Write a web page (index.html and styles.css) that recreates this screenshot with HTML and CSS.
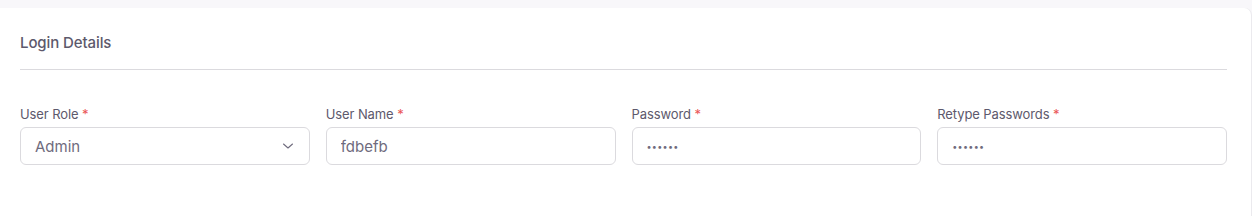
FILE: index.html
```html
<!DOCTYPE html>
<html lang="en">
<head>
    <meta charset="UTF-8">
    <meta name="viewport" content="width=device-width, initial-scale=1.0">
    <title>Login Details</title>
    <link rel="stylesheet" href="styles.css">
</head>
<body>
    <div class="card">
        <h5 class="card-title">Login Details</h5>
        <hr class="divider">

        <div class="form-grid">
            <div class="field">
                <label class="form-label">User Role <span class="req">*</span></label>
                <div class="select-wrap">
                    <select class="form-control">
                        <option>Admin</option>
                        <option>Manager</option>
                        <option>Staff</option>
                    </select>
                    <svg class="caret" width="12" height="12" viewBox="0 0 12 12" fill="none">
                        <path d="M1.5 4l4.5 4 4.5-4" stroke="#6f6b7d" stroke-width="1.1" stroke-linecap="round" stroke-linejoin="round"/>
                    </svg>
                </div>
            </div>
            <div class="field">
                <label class="form-label">User Name <span class="req">*</span></label>
                <input class="form-control" type="text" value="fdbefb">
            </div>
            <div class="field">
                <label class="form-label">Password <span class="req">*</span></label>
                <input class="form-control secret" type="password" value="123456">
            </div>
            <div class="field">
                <label class="form-label">Retype Passwords <span class="req">*</span></label>
                <input class="form-control secret" type="password" value="123456">
            </div>
        </div>
    </div>
</body>
</html>
```

FILE: styles.css
```css
body {
    margin: 0;
    background: #f8f7fa;
    font-family: Inter, 'Noto Sans', sans-serif;
    color: #5d596c;
    overflow: hidden;
}

.card {
    background: #fff;
    margin: 8px 1px 0 -4px;
    padding: 24px 24px 52px 24px;
    border-radius: 0 7px 0 0;
    box-shadow: 1px 0 0 #ebeaee;
}

.card-title {
    margin: 0;
    font-size: 15px;
    font-weight: 500;
    line-height: 22px;
    letter-spacing: -0.1px;
    color: #5d596c;
}

.divider {
    border: none;
    border-top: 1px solid #dbdade;
    margin: 15px 0 0 0;
}

.form-grid {
    display: grid;
    grid-template-columns: repeat(4, 1fr);
    gap: 16px;
    margin-top: 35px;
}

.form-label {
    display: block;
    font-size: 13px;
    line-height: 18px;
    color: #5d596c;
    margin-bottom: 4px;
    letter-spacing: -0.1px;
}

.req {
    color: #ea5455;
}

.form-control {
    display: block;
    width: 100%;
    box-sizing: border-box;
    height: 38px;
    padding: 0 14px;
    border: 1px solid #dbdade;
    border-radius: 6px;
    background: #fff;
    font-family: inherit;
    font-size: 15px;
    color: #6f6b7d;
    outline: none;
    appearance: none;
    -webkit-appearance: none;
}

.secret {
    font-size: 9px;
    letter-spacing: 0.3px;
}

.select-wrap {
    position: relative;
}

.caret {
    position: absolute;
    right: 16px;
    top: 13px;
    pointer-events: none;
}
```
